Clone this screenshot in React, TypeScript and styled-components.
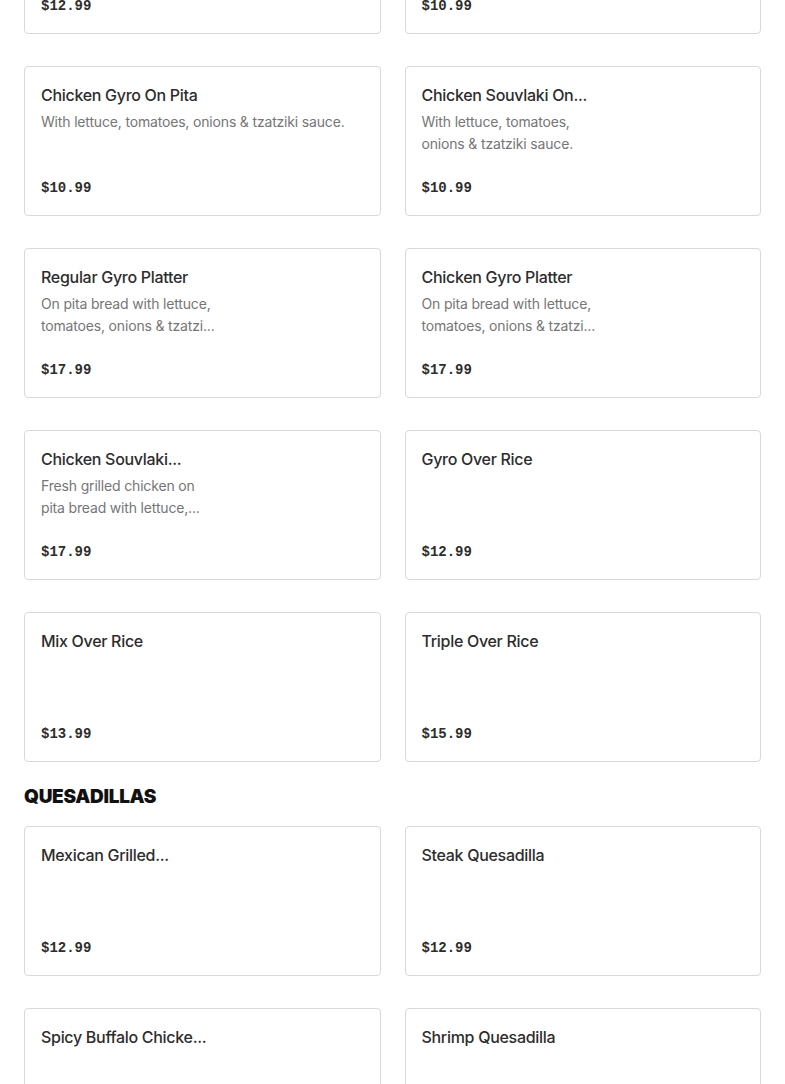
import React from "react";
import styled, { createGlobalStyle } from "styled-components";

const Global = createGlobalStyle`
  html, body { margin: 0; padding: 0; background: #ffffff; overflow: hidden; }
  body { font-family: "Inter", "Liberation Sans", sans-serif; }
`;

const Page = styled.div`
  margin-top: -116px;
  padding: 0 24px;
  display: flex;
  flex-direction: column;
`;

const Grid = styled.div`
  display: grid;
  grid-template-columns: 1fr 1fr;
  column-gap: 24px;
  row-gap: 32px;
`;

const SectionTitle = styled.h2`
  margin: 20px 0 14px;
  font-family: "Inter", "Liberation Sans", sans-serif;
  font-size: 19px;
  line-height: 30px;
  font-weight: 900;
  color: #111111;
  letter-spacing: -0.3px;
`;

const Card = styled.div`
  box-sizing: border-box;
  height: 150px;
  border: 1px solid #d9d9d9;
  border-radius: 4px;
  padding: 16px 16px 15px;
  display: flex;
  flex-direction: column;
  background: #ffffff;
`;

const Title = styled.div`
  font-size: 16px;
  line-height: 24px;
  font-weight: 500;
  color: #2d2d2d;
  letter-spacing: -0.3px;
  white-space: nowrap;
  overflow: hidden;
  text-overflow: ellipsis;
`;

const Desc = styled.div<{ $narrow?: boolean }>`
  margin-top: 4px;
  font-size: 14px;
  line-height: 22px;
  font-weight: 400;
  color: #767676;
  letter-spacing: -0.17px;
  max-width: ${(p) => (p.$narrow ? "180px" : "none")};
`;

const Price = styled.div`
  margin-top: auto;
  font-family: "Liberation Mono", "DejaVu Sans Mono", monospace;
  font-size: 14px;
  line-height: 24px;
  font-weight: 700;
  color: #2d2d2d;
`;

type Item = { title: string; desc?: string; price: string; narrow?: boolean };

const rows1: Item[] = [
  { title: "Regular Gyro On Pita", price: "$12.99" },
  { title: "Gyro Over Rice", price: "$10.99" },
  { title: "Chicken Gyro On Pita", desc: "With lettuce, tomatoes, onions & tzatziki sauce.", price: "$10.99" },
  { title: "Chicken Souvlaki On...", desc: "With lettuce, tomatoes, onions & tzatziki sauce.", price: "$10.99", narrow: true },
  { title: "Regular Gyro Platter", desc: "On pita bread with lettuce, tomatoes, onions & tzatzi...", price: "$17.99", narrow: true },
  { title: "Chicken Gyro Platter", desc: "On pita bread with lettuce, tomatoes, onions & tzatzi...", price: "$17.99", narrow: true },
  { title: "Chicken Souvlaki...", desc: "Fresh grilled chicken on pita bread with lettuce,...", price: "$17.99", narrow: true },
  { title: "Gyro Over Rice", price: "$12.99" },
  { title: "Mix Over Rice", price: "$13.99" },
  { title: "Triple Over Rice", price: "$15.99" },
];

const rows2: Item[] = [
  { title: "Mexican Grilled...", price: "$12.99" },
  { title: "Steak Quesadilla", price: "$12.99" },
  { title: "Spicy Buffalo Chicke...", price: "$12.99" },
  { title: "Shrimp Quesadilla", price: "$12.99" },
];

const MenuCard = ({ item }: { item: Item }) => (
  <Card>
    <Title>{item.title}</Title>
    {item.desc && <Desc $narrow={item.narrow}>{item.desc}</Desc>}
    <Price>{item.price}</Price>
  </Card>
);

export default function App() {
  return (
    <>
      <Global />
      <Page>
        <Grid>
          {rows1.map((it, i) => (
            <MenuCard key={i} item={it} />
          ))}
        </Grid>
        <SectionTitle>QUESADILLAS</SectionTitle>
        <Grid>
          {rows2.map((it, i) => (
            <MenuCard key={i} item={it} />
          ))}
        </Grid>
      </Page>
    </>
  );
}
